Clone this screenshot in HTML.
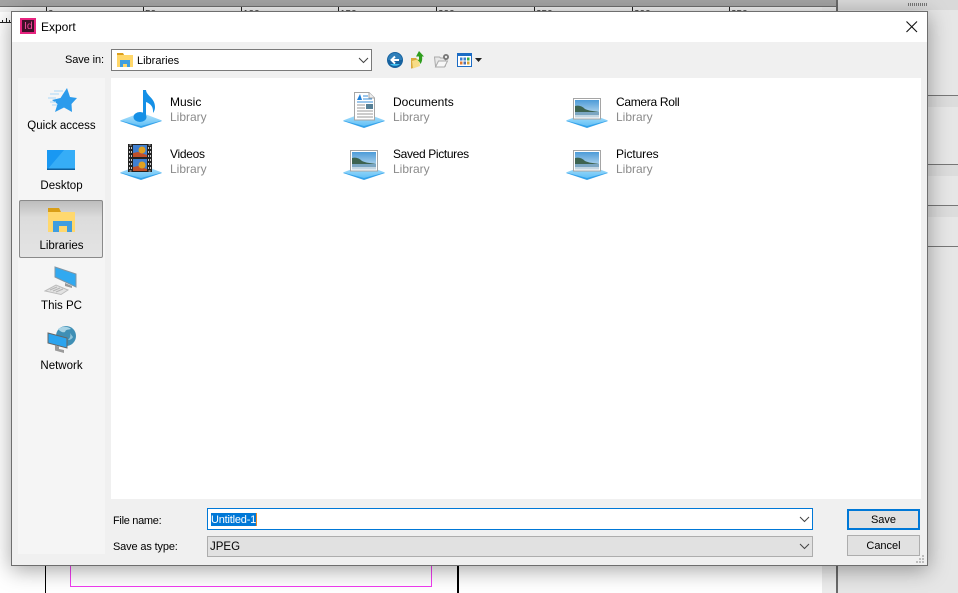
<!DOCTYPE html>
<html><head><meta charset="utf-8"><title>Export</title>
<style>
html,body{margin:0;padding:0;background:#fff}
#p{position:relative;width:958px;height:593px;overflow:hidden;background:#fff;font-family:"Liberation Sans",sans-serif;color:#000}
#p div,#p svg{position:absolute}
.t{white-space:nowrap;font-size:12px;line-height:14px}
.g{color:#8b8b8b}
.c{text-align:center}
</style></head><body>
<div id="p">
<svg style="left:0;top:0;width:0;height:0"><defs>
<linearGradient id="pl" x1="0" y1="0" x2="0" y2="1"><stop offset="0" stop-color="#b9e6fc"/><stop offset="1" stop-color="#62c0f6"/></linearGradient>
<linearGradient id="sky" x1="0" y1="0" x2="0" y2="1"><stop offset="0" stop-color="#4d9bd8"/><stop offset="1" stop-color="#cfe6f3"/></linearGradient>
<g id="pic"><path d="M0 23l21-8 21 8-21 7z" fill="#34a2ea"/><path d="M0 22.500l21-8 21 8-21 5.500z" fill="url(#pl)"/><rect x="7.500" y=".5" width="27" height="20.500" fill="#fff" stroke="#a5a5a5"/><rect x="9" y="2" width="24" height="17.500" fill="url(#sky)"/><path d="M9 8c4-1 7 0 10 3 4 2 9 2 14 3v5.500H9z" fill="#3d6350"/><rect x="9" y="14" width="24" height="5.500" fill="#7ba6c2"/><rect x="9" y="17" width="24" height="2.500" fill="#c3d6e2"/></g>
</defs></svg>
<!-- background app -->
<div style="left:0;top:0;width:836px;height:6px;background:#a3a3a3"></div>
<div style="left:0;top:6px;width:836px;height:1px;background:#6e6e6e"></div>
<div style="left:0;top:7px;width:822px;height:30px;background:#f0f0f0"></div>
<div style="left:822px;top:7px;width:14px;height:586px;background:#ececec"></div>
<div style="left:0;top:12px;width:11px;height:581px;background:#fff"></div>
<div style="left:836px;top:0;width:2px;height:593px;background:#6a6a6a"></div>
<div style="left:838px;top:0;width:120px;height:593px;background:#e6e6e6"></div>
<div style="left:838px;top:0;width:120px;height:10px;background:#d9d9d9"></div>
<div style="left:908px;top:3px;width:19px;height:3px;background:repeating-linear-gradient(90deg,#777 0,#777 1px,#d9d9d9 1px,#d9d9d9 2px)"></div>
<div style="left:838px;top:95px;width:120px;height:1px;background:#777"></div>
<div style="left:838px;top:96px;width:120px;height:11px;background:#dcdcdc"></div>
<div style="left:838px;top:164px;width:120px;height:1px;background:#777"></div>
<div style="left:838px;top:165px;width:120px;height:11px;background:#dcdcdc"></div>
<div style="left:838px;top:205px;width:120px;height:1px;background:#777"></div>
<div style="left:838px;top:206px;width:120px;height:11px;background:#dcdcdc"></div>
<div style="left:838px;top:246px;width:120px;height:1px;background:#777"></div>
<!-- ruler ticks -->
<div style="left:46px;top:7px;width:1px;height:5px;background:#222"></div>
<div style="left:143px;top:7px;width:1px;height:5px;background:#222"></div>
<div style="left:241px;top:7px;width:1px;height:5px;background:#222"></div>
<div style="left:338px;top:7px;width:1px;height:5px;background:#222"></div>
<div style="left:436px;top:7px;width:1px;height:5px;background:#222"></div>
<div style="left:534px;top:7px;width:1px;height:5px;background:#222"></div>
<div style="left:632px;top:7px;width:1px;height:5px;background:#222"></div>
<div style="left:729px;top:7px;width:1px;height:5px;background:#222"></div>
<div class="t" style="left:48px;top:8px;font-size:10px;color:#333;height:4px;overflow:hidden">0</div>
<div class="t" style="left:145px;top:8px;font-size:10px;color:#333;height:4px;overflow:hidden">50</div>
<div class="t" style="left:243px;top:8px;font-size:10px;color:#333;height:4px;overflow:hidden">100</div>
<div class="t" style="left:340px;top:8px;font-size:10px;color:#333;height:4px;overflow:hidden">150</div>
<div class="t" style="left:438px;top:8px;font-size:10px;color:#333;height:4px;overflow:hidden">200</div>
<div class="t" style="left:536px;top:8px;font-size:10px;color:#333;height:4px;overflow:hidden">250</div>
<div class="t" style="left:634px;top:8px;font-size:10px;color:#333;height:4px;overflow:hidden">300</div>
<div class="t" style="left:731px;top:8px;font-size:10px;color:#333;height:4px;overflow:hidden">350</div>
<div style="left:0;top:22px;width:12px;height:1px;background:#222"></div>
<div style="left:2px;top:20px;width:1px;height:2px;background:#222"></div>
<div style="left:6px;top:18px;width:1px;height:4px;background:#222"></div>
<div style="left:9px;top:20px;width:1px;height:2px;background:#222"></div>
<!-- page below -->
<div style="left:45px;top:560px;width:1px;height:33px;background:#000"></div>
<div style="left:70px;top:560px;width:1px;height:26px;background:#f03cf0"></div>
<div style="left:70px;top:586px;width:362px;height:1px;background:#f03cf0"></div>
<div style="left:431px;top:560px;width:1px;height:26px;background:#f03cf0"></div>
<div style="left:457px;top:560px;width:2px;height:33px;background:#000"></div>

<!-- dialog -->
<div style="left:11px;top:11px;width:915px;height:553px;border:1px solid #6e6e6e;background:#f0f0f0;box-shadow:0 4px 20px rgba(0,0,0,.36)"></div>
<div style="left:12px;top:12px;width:915px;height:30px;background:#fff"></div>
<!-- Id icon -->
<div style="left:20px;top:18px;width:12px;height:12px;border:2px solid #e6247f;background:#3f1029"></div>
<div class="t" style="left:24px;top:19px;font-size:10.500px;color:#f0479a">Id</div>
<div class="t" style="left:41px;top:20px;font-size:12px">Export</div>
<svg style="left:906px;top:21px" width="12" height="12" viewBox="0 0 12 12"><path d="M.5.5l10.500 10.500M11 .5L.5 11" stroke="#111" stroke-width="1.100" fill="none"/></svg>

<!-- toolbar -->
<div class="t" style="left:65px;top:53px;font-size:11px;letter-spacing:-.1px">Save in:</div>
<div style="left:111px;top:49px;width:259px;height:20px;border:1px solid #7a7a7a;background:#fff"></div>
<svg style="left:117px;top:53px" width="16" height="14" viewBox="0 0 16 14"><path d="M0 0h6l1 2h9v12H0z" fill="#ffd76a"/><path d="M0 0h6l1 2H0z" fill="#dc9f1c"/><path d="M3 14V7h10v7h-3v-3H6v3z" fill="#3f9fe0"/></svg>
<div class="t" style="left:137px;top:54px;font-size:11px">Libraries</div>
<svg style="left:358px;top:57px" width="11" height="7" viewBox="0 0 11 7"><path d="M1 1l4.500 4.500L10 1" stroke="#444" stroke-width="1" fill="none"/></svg>
<svg style="left:387px;top:52px" width="16" height="16" viewBox="0 0 16 16"><circle cx="8" cy="8" r="8" fill="#17629f"/><path d="M1 8a7 7 0 0 1 14 0z" fill="#2f7fba"/><path d="M3 12a6 4 0 0 0 10 0z" fill="#3fc0ef"/><path d="M12 8H5M8 4.500L4.500 8 8 11.500" stroke="#fff" stroke-width="2" fill="none"/></svg>
<svg style="left:411px;top:51px" width="15" height="18" viewBox="0 0 15 18"><path d="M0 7h5l1 1v7l-5 2.500H0z" fill="#d9a93c"/><path d="M1 10l7-2 1 7-7 2.500z" fill="#f7dc86"/><path d="M8 0l5 5.500h-2c.5 3 0 5-1.500 7.500-1-2.500-2-3.500-4-4.500 1 0 2 .5 2.500.5V5.500H5z" fill="#2f9e1e"/></svg>
<svg style="left:434px;top:53px" width="16" height="15" viewBox="0 0 16 15"><path d="M.5 4h5l1 1h5v8h-10z" fill="#e8e8e8" stroke="#aaa"/><path d="M1.500 14l3-6h9l-3 6z" fill="#f7f7f7" stroke="#aaa"/><circle cx="12" cy="4" r="3" fill="#777"/><circle cx="12" cy="4" r="1.200" fill="#eee"/></svg>
<svg style="left:457px;top:53px" width="25" height="15" viewBox="0 0 25 15"><rect x=".5" y=".5" width="14" height="13" fill="#fff" stroke="#1c6cc4"/><rect x="1" y="1" width="13" height="2" fill="#1c6cc4"/><rect x="3" y="4.500" width="2.500" height="3" fill="#3b7fd0"/><rect x="6.500" y="4.500" width="2.500" height="3" fill="#3b7fd0"/><rect x="10" y="4.500" width="2.500" height="3" fill="#35a845"/><rect x="3" y="8.500" width="2.500" height="3" fill="#e07a30"/><rect x="6.500" y="8.500" width="2.500" height="3" fill="#4a6fb0"/><rect x="10" y="8.500" width="2.500" height="3" fill="#d9a030"/><path d="M18 5h7l-3.500 4z" fill="#222"/></svg>

<!-- sidebar -->
<div style="left:18px;top:78px;width:87px;height:476px;background:#f5f5f5"></div>
<svg style="left:47px;top:88px" width="32" height="26" viewBox="0 0 32 26"><path d="M20 0l3 9 7 1-5.500 6 .5 8-8-4.500L8 24l2.500-8L5 12l8.500-2z" fill="#2b9bec"/><path d="M7 3h9M3 6h9M1 10h8M3 14h6M5 17h5" stroke="#a9d8f8" stroke-width="1"/></svg>
<div class="t c" style="left:18px;width:87px;top:119px;font-size:11.500px">Quick access</div>
<svg style="left:47px;top:150px" width="28" height="20" viewBox="0 0 28 20"><rect width="28" height="20" fill="#1998f2"/><path d="M0 20L17 0h11v20z" fill="#36adf7"/><rect y="18.500" width="28" height="1.500" fill="#0f5f9e"/></svg>
<div class="t c" style="left:18px;width:87px;top:179px;font-size:11.500px">Desktop</div>
<div style="left:19px;top:200px;width:82px;height:56px;border:1px solid #8a8a8a;border-radius:2px;background:linear-gradient(#bdbdbd,#dcdcdc 30%,#e4e4e4)"></div>
<svg style="left:47px;top:207px" width="30" height="26" viewBox="0 0 30 26"><path d="M1 1h11l2 4h14v20H1z" fill="#ffd86e"/><path d="M1 1h11l2 4H1z" fill="#d99e16"/><path d="M6 25V14h19v11h-5v-6h-8v6z" fill="#3f9ee0"/></svg>
<div class="t c" style="left:18px;width:87px;top:239px;font-size:11.500px">Libraries</div>
<svg style="left:44px;top:266px" width="34" height="30" viewBox="0 0 34 30"><path d="M11 1l21 7v13L11 11z" fill="#31a9f0" stroke="#7f96a6"/><path d="M21 17l7 3v2l-7-2z" fill="#999"/><path d="M1 25l11-6 12 5-7 4.500z" fill="#e2e2e2" stroke="#bcbcbc"/><path d="M6 24l7-3M9 25l7-3M12 26l7-3" stroke="#b4b4b4"/></svg>
<div class="t c" style="left:18px;width:87px;top:299px;font-size:11.500px">This PC</div>
<svg style="left:46px;top:325px" width="31" height="30" viewBox="0 0 31 30"><circle cx="20" cy="11" r="10" fill="#3f8fb5"/><path d="M12 4c4-3 10-3 13 0-3 1-5 0-6 3-3 1-5-1-7-3z" fill="#a9d4e6"/><path d="M24 8c1 3 0 5-2 7 2 0 4-1 5-3z" fill="#8fc4da"/><path d="M2 8l19 5v10L2 18z" fill="#2ba4ef" stroke="#666"/><path d="M9 20.500v5l9 2.500v-3l-5-1v-2.500z" fill="#9a9a9a"/></svg>
<div class="t c" style="left:18px;width:87px;top:359px;font-size:11.500px">Network</div>

<!-- main list -->
<div style="left:111px;top:78px;width:810px;height:421px;background:#fff"></div>

<!-- Music -->
<svg style="left:120px;top:88px" width="42" height="41" viewBox="0 0 42 41"><path d="M0 33l21-8 21 8-21 7z" fill="#34a2ea"/><path d="M0 32.500l21-8 21 8-21 5.500z" fill="url(#pl)"/><ellipse cx="20" cy="29" rx="6.500" ry="5" fill="#1590e6"/><path d="M23 2h3c.5 6 9 8 9 17 0 2-.5 4-2 6 .5-6-2-9-7-11v15h-3z" fill="#1590e6"/></svg>
<div class="t" style="left:170px;top:95px">Music</div>
<div class="t g" style="left:170px;top:110px">Library</div>
<!-- Videos -->
<svg style="left:120px;top:144px" width="42" height="37" viewBox="0 0 42 37"><path d="M0 29l21-8 21 8-21 7z" fill="#34a2ea"/><path d="M0 28.500l21-8 21 8-21 5.500z" fill="url(#pl)"/><rect x="8" y="0" width="24" height="28" fill="#222"/><rect x="9.500" y="1" width="2" height="26" fill="none" stroke="#ccc" stroke-dasharray="2 2"/><rect x="28.500" y="1" width="2" height="26" fill="none" stroke="#ccc" stroke-dasharray="2 2"/><rect x="13" y="1" width="14" height="12" fill="#3f7fd0"/><rect x="13" y="15" width="14" height="12" fill="#3f7fd0"/><path d="M13 9l5-1 9 3v2H13zM13 23l5-1 9 3v2H13z" fill="#c0502a"/><circle cx="22" cy="6" r="3.500" fill="#e0a020"/><circle cx="22" cy="21" r="3.500" fill="#e0a020"/></svg>
<div class="t" style="left:170px;top:147px;letter-spacing:-.3px">Videos</div>
<div class="t g" style="left:170px;top:162px">Library</div>
<!-- Documents -->
<svg style="left:343px;top:90px" width="42" height="39" viewBox="0 0 42 39"><path d="M0 31l21-8 21 8-21 7z" fill="#34a2ea"/><path d="M0 30.500l21-8 21 8-21 5.500z" fill="url(#pl)"/><path d="M11.500 2.500H26l5.500 5.500v22h-20z" fill="#fff" stroke="#a5a5a5"/><path d="M26 2.500V8h5.500" fill="#eee" stroke="#a5a5a5"/><path d="M17 4l2 6h-5z" fill="#1f7fd8"/><path d="M20 6h5M20 9h9M14 12h16" stroke="#3a8fd8"/><path d="M14 15h8M14 18h8M14 21h16M14 24h16M14 27h16" stroke="#9a9a9a"/><rect x="23" y="14" width="7" height="5" fill="#557f96"/></svg>
<div class="t" style="left:393px;top:95px">Documents</div>
<div class="t g" style="left:393px;top:110px">Library</div>

<!-- Pictures icons -->
<svg style="left:343px;top:150px" width="42" height="31" viewBox="0 0 42 31"><use href="#pic"/></svg>
<div class="t" style="left:393px;top:147px;letter-spacing:-.35px">Saved Pictures</div>
<div class="t g" style="left:393px;top:162px">Library</div>
<svg style="left:566px;top:98px" width="42" height="31" viewBox="0 0 42 31"><use href="#pic"/></svg>
<div class="t" style="left:616px;top:95px;letter-spacing:-.3px">Camera Roll</div>
<div class="t g" style="left:616px;top:110px">Library</div>
<svg style="left:566px;top:150px" width="42" height="31" viewBox="0 0 42 31"><use href="#pic"/></svg>
<div class="t" style="left:616px;top:147px;letter-spacing:-.1px">Pictures</div>
<div class="t g" style="left:616px;top:162px">Library</div>

<!-- bottom -->
<div class="t" style="left:113px;top:514px;font-size:11px;letter-spacing:-.3px">File name:</div>
<div style="left:207px;top:508px;width:604px;height:20px;border:1px solid #0078d7;background:#fff"></div>
<div style="left:211px;top:513px;width:45px;height:13px;background:#0078d7"></div>
<div style="left:256px;top:513px;width:1px;height:13px;background:#f08a24"></div>
<div class="t" style="left:211px;top:513px;color:#fff;font-size:11px;letter-spacing:-.2px">Untitled-1</div>
<svg style="left:799px;top:516px" width="11" height="7" viewBox="0 0 11 7"><path d="M1 1l4.500 4.500L10 1" stroke="#444" fill="none"/></svg>
<div class="t" style="left:113px;top:540px;font-size:11px;letter-spacing:-.15px">Save as type:</div>
<div style="left:207px;top:536px;width:604px;height:19px;border:1px solid #adadad;background:#e1e1e1"></div>
<div class="t" style="left:210px;top:540px;font-size:11.500px">JPEG</div>
<svg style="left:799px;top:543px" width="11" height="7" viewBox="0 0 11 7"><path d="M1 1l4.500 4.500L10 1" stroke="#444" fill="none"/></svg>
<div class="t c" style="left:847px;top:509px;width:69px;height:17px;line-height:19px;border:2px solid #0078d7;background:#e1e1e1;font-size:11px">Save</div>
<div class="t c" style="left:847px;top:535px;width:71px;height:19px;line-height:21px;border:1px solid #adadad;background:#e1e1e1;font-size:11px">Cancel</div>
<svg style="left:916px;top:555px" width="9" height="9" viewBox="0 0 9 9"><path d="M6 0h2v2H6zM3 3h2v2H3zM6 3h2v2H6zM0 6h2v2H0zM3 6h2v2H3zM6 6h2v2H6z" fill="#bdbdbd"/></svg>
</div>
</body></html>
